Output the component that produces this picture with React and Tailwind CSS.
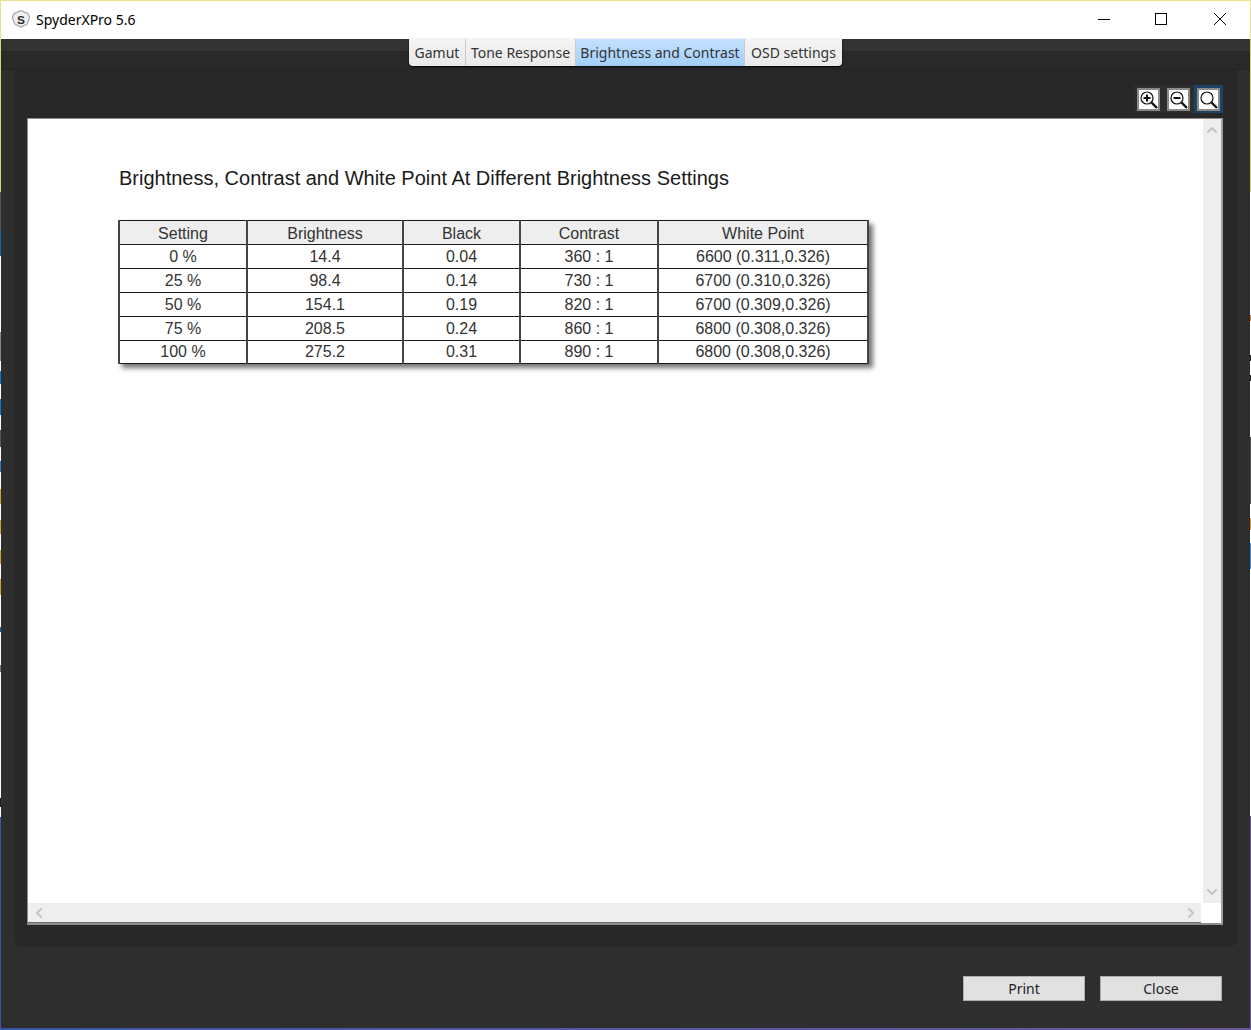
import { ChevronUp, ChevronDown, ChevronLeft, ChevronRight } from 'lucide-react';

const rows = [
  ['0 %', '14.4', '0.04', '360 : 1', '6600 (0.311,0.326)'],
  ['25 %', '98.4', '0.14', '730 : 1', '6700 (0.310,0.326)'],
  ['50 %', '154.1', '0.19', '820 : 1', '6700 (0.309,0.326)'],
  ['75 %', '208.5', '0.24', '860 : 1', '6800 (0.308,0.326)'],
  ['100 %', '275.2', '0.31', '890 : 1', '6800 (0.308,0.326)'],
];
const headers = ['Setting', 'Brightness', 'Black', 'Contrast', 'White Point'];
const tabs = [
  { label: 'Gamut', w: 'w-[56px]' },
  { label: 'Tone Response', w: 'w-[110px]' },
  { label: 'Brightness and Contrast', w: 'w-[169px] bg-gradient-to-b from-[#c4e0fd] to-[#a3cffb]' },
  { label: 'OSD settings', w: 'w-[98px]' },
];
const cell = 'p-0 leading-[20px] border-x-2 border-x-[#444] border-y border-y-[#1a1a1a]';

function ZoomIcon({ mode }) {
  return (
    <div className="w-[23px] h-[23px] bg-white border-2 border-[#8a8a8a]">
      <svg viewBox="0 0 19 19" className="w-full h-full" fill="none" stroke="#111">
        <circle cx="8" cy="8" r="6" strokeWidth="1.2" />
        <path d="M12.5 12.5 L18 18" strokeWidth="2.4" />
        {mode !== 'fit' && <path d="M4.5 8 H11.5" strokeWidth="2" />}
        {mode === 'in' && <path d="M8 4.5 V11.5" strokeWidth="2" />}
      </svg>
    </div>
  );
}

export default function App() {
  return (
    <div className="w-[1251px] h-[1030px] flex flex-col overflow-hidden border-t border-[#e8e48c] bg-[#2e2e2e] font-['Noto_Sans',sans-serif]">
      <div className="h-[38px] shrink-0 bg-white flex items-center border-l border-r border-[#e8e48c]">
        <svg viewBox="0 0 22 22" className="w-[20px] h-[20px] ml-[10px] mb-[2px]">
          <path d="M11 2 C14 2 14 4 16 4 C19 4 21 8 20 11 C19 13 19 14 18 16 C16 19 14 17 11 20 C8 17 6 19 4 16 C3 14 3 13 2 11 C1 8 3 4 6 4 C8 4 8 2 11 2 Z" fill="#f0f0f0" stroke="#a8a8a8" strokeWidth="1.4" />
          <text x="11" y="16" textAnchor="middle" fontSize="13" fontWeight="700" fill="#2a2a2a" fontFamily="Liberation Sans">S</text>
        </svg>
        <span className="ml-[5px] mb-[2px] text-[14px] text-black">SpyderXPro 5.6</span>
        <div className="ml-auto flex items-center mb-[2px]">
          <svg viewBox="0 0 14 14" className="w-[14px] h-[14px] mr-[43px]" fill="none" stroke="#000"><path d="M1 7.5 H13" /></svg>
          <svg viewBox="0 0 14 14" className="w-[14px] h-[14px] mr-[45px]" fill="none" stroke="#000"><rect x="1.5" y="1.5" width="11" height="11" /></svg>
          <svg viewBox="0 0 14 14" className="w-[14px] h-[14px] mr-[23px]" fill="none" stroke="#000"><path d="M1 1 L13 13 M13 1 L1 13" /></svg>
        </div>
      </div>

      <div className="flex-1 flex min-h-0">
        <div className="w-[1px] shrink-0 bg-[linear-gradient(to_bottom,#d8d472_0,#d8d472_153px,#555_153px,#555_191px,#0a64b0_191px,#0a64b0_217px,#fff_217px,#fff_293px,#888_293px,#888_322px,#fff_322px,#fff_332px,#0a78d0_332px,#0a78d0_345px,#fff_345px,#fff_360px,#0a78d0_360px,#0a78d0_376px,#fff_376px,#fff_391px,#555_391px,#555_408px,#fff_408px,#fff_422px,#2a78c8_422px,#2a78c8_433px,#fff_433px,#fff_450px,#d8a030_450px,#d8a030_465px,#fff_465px,#fff_481px,#d8a030_481px,#d8a030_495px,#fff_495px,#fff_511px,#d8a030_511px,#d8a030_525px,#fff_525px,#fff_540px,#d8a030_540px,#d8a030_556px,#fff_556px,#fff_588px,#0a64b0_588px,#0a64b0_593px,#fff_593px,#fff_626px,#777_626px,#777_633px,#fff_633px,#fff_759px,#222_759px,#222_768px,#fff_768px,#fff_778px,#3a55a8_778px,#3a55a8_100%)]" />

        <div className="flex-1 flex flex-col min-w-0">
          <div className="h-[31px] shrink-0 flex justify-center bg-gradient-to-b from-[#333333] from-40% to-[#292929] to-40% border-b border-[#242424]">
            <div className="h-[27px] flex rounded-b-[4px] overflow-hidden bg-gradient-to-b from-[#f4f4f4] to-[#e9e9e9] shadow-[0_1px_2px_#000]">
              {tabs.map((t, i) => (
                <div key={t.label} className={`${t.w} flex items-center justify-center text-[14px] text-[#333] ${i > 0 ? 'border-l border-[#c9c9c9]' : ''}`}>{t.label}</div>
              ))}
            </div>
          </div>

          <div className="flex-1 px-[13px] flex flex-col">
            <div className="h-[877px] shrink-0 bg-[#282828] rounded-b-[8px] flex flex-col pl-[13px] pr-[14px]">
              <div className="h-[48px] shrink-0 flex items-end justify-end pb-[5px]">
                <div className="h-[28px] flex items-center pl-[3px] gap-[7px] bg-[#2e2e2e]">
                  <ZoomIcon mode="in" />
                  <div className="flex items-center gap-[4px]">
                    <ZoomIcon mode="out" />
                    <div className="w-[29px] h-[28px] bg-[#1d4263] flex items-center justify-center">
                      <ZoomIcon mode="fit" />
                    </div>
                  </div>
                </div>
              </div>
              <div className="h-[807px] border border-[#8c8c8c] border-r-2 border-r-[#a0a0a0] border-b-2 bg-white flex flex-col">
                <div className="flex-1 flex min-h-0">
                  <div className="flex-1 pl-[90px] pt-[46px]">
                    <h1 className="pl-[1px] font-['Liberation_Sans',sans-serif] text-[20px] leading-[26px] text-[#1a1a1a]">Brightness, Contrast and White Point At Different Brightness Settings</h1>
                    <table className="mt-[29px] w-[749px] table-fixed border-collapse font-['Liberation_Sans',sans-serif] text-[16px] text-[#333] text-center shadow-[4px_4px_5px_rgba(0,0,0,0.55)]">
                      <colgroup>
                        <col className="w-[128px]" />
                        <col className="w-[156px]" />
                        <col className="w-[117px]" />
                        <col className="w-[138px]" />
                        <col className="w-[210px]" />
                      </colgroup>
                      <thead>
                        <tr className="h-[24px] bg-[#eeeeee]">
                          {headers.map((h) => <th key={h} className={`font-normal pt-[2px] ${cell}`}>{h}</th>)}
                        </tr>
                      </thead>
                      <tbody>
                        {rows.map((r, n) => (
                          <tr key={r[0]} className={n === 4 ? 'h-[23px]' : 'h-[24px]'}>
                            {r.map((c, i) => <td key={i} className={cell}>{c}</td>)}
                          </tr>
                        ))}
                      </tbody>
                    </table>
                  </div>
                  <div className="w-[18px] bg-[#eeeeee] flex flex-col justify-between items-center py-[3px] text-[#c4c4c4]">
                    <ChevronUp size={16} strokeWidth={3} />
                    <ChevronDown size={16} strokeWidth={3} />
                  </div>
                </div>
                <div className="h-[20px] shrink-0 flex">
                  <div className="flex-1 bg-[#eeeeee] flex justify-between items-center pl-[3px] pr-[2px] text-[#c4c4c4] border-b border-[#707070]">
                    <ChevronLeft size={16} strokeWidth={3} />
                    <ChevronRight size={16} strokeWidth={3} />
                  </div>
                  <div className="w-[20px] bg-white" />
                </div>
              </div>
            </div>
            <div className="flex justify-end gap-[15px] pt-[29px] pr-[15px]">
              <button className="w-[122px] h-[25px] bg-[#e1e1e1] border border-[#adadad] text-[14px] text-[#222]">Print</button>
              <button className="w-[122px] h-[25px] bg-[#e1e1e1] border border-[#adadad] text-[14px] text-[#222]">Close</button>
            </div>
          </div>
          <div className="h-[2px] shrink-0 bg-gradient-to-r from-[#3a55a8] to-[#6a5a9a]" />
        </div>

        <div className="w-[1px] shrink-0 bg-[linear-gradient(to_bottom,#d8d472_0,#d8d472_153px,#fff_153px,#fff_276px,#c89040_276px,#c89040_282px,#fff_282px,#fff_316px,#222_316px,#222_322px,#fff_322px,#fff_336px,#222_336px,#222_342px,#fff_342px,#fff_398px,#555_398px,#555_465px,#fff_465px,#fff_479px,#d89030_479px,#d89030_491px,#fff_491px,#fff_504px,#3a88d8_504px,#3a88d8_530px,#fff_530px,#fff_777px,#6a5a9a_777px,#6a5a9a_100%)]" />
      </div>
    </div>
  );
}
